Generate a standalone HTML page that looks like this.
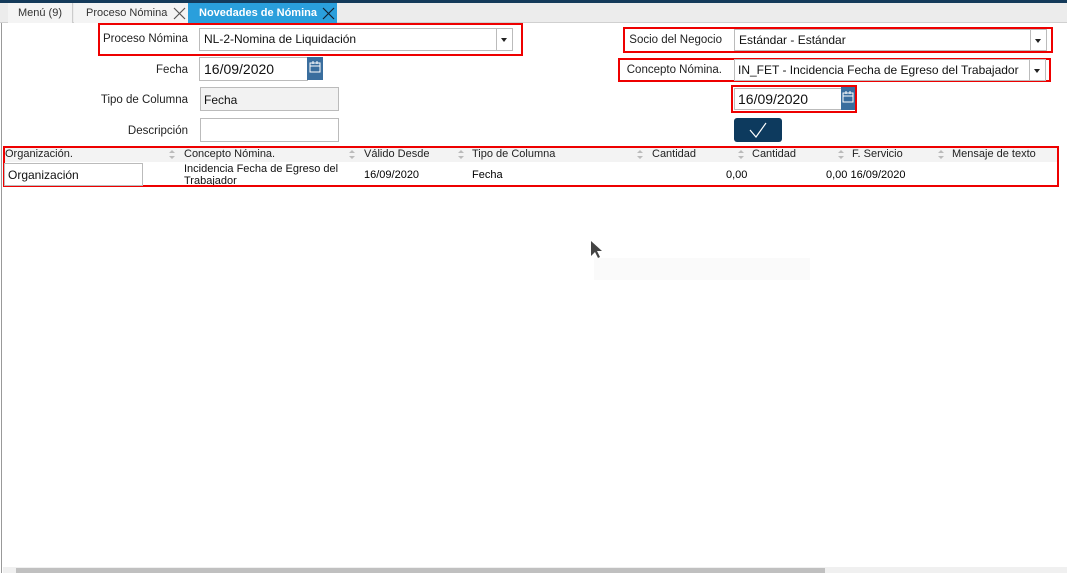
<!DOCTYPE html>
<html><head><meta charset="utf-8"><style>
body{margin:0;width:1067px;height:573px;position:relative;background:#fff;font-family:"Liberation Sans",sans-serif;overflow:hidden}
.a{position:absolute;box-sizing:border-box}
.lbl{font-size:11.5px;color:#222;text-align:right}
.inp{border:1px solid #bbb;background:#fff;font-size:12px;padding:0 4px;line-height:20px;color:#111}
.red{border:2px solid #e00}
.dd{position:absolute;right:0;top:0;bottom:0;width:15px;border-left:1px solid #bbb;background:#fff}
.dd:after{content:"";position:absolute;left:4px;top:9px;border-left:3px solid transparent;border-right:3px solid transparent;border-top:4px solid #222}
.cal{background:#3a6e9e}
.cal svg{position:absolute;left:2px;top:4px}
.hd{font-size:11px;color:#222;top:148px}
.srt{top:149px}
</style></head><body>
<div class="a" style="left:0;top:0;width:1067px;height:3px;background:#143a5a"></div>
<div class="a" style="left:0;top:3px;width:1067px;height:20px;background:#ececec;border-bottom:1px solid #d0d0d0"></div>
<div class="a" style="left:1px;top:23px;width:1px;height:550px;background:#999"></div>
<div class="a" style="left:8px;top:3px;width:65px;height:20px;background:#f4f4f4;border-right:1px solid #ccc;font-size:11px;color:#333;line-height:20px;text-align:center">Menú (9)</div>
<div class="a" style="left:74px;top:3px;width:114px;height:20px;background:#f4f4f4;font-size:11px;color:#333;line-height:20px;padding-left:12px">Proceso Nómina</div>
<svg class="a" style="left:173px;top:7px" width="13" height="13"><path d="M1 1L12 12M12 1L1 12" stroke="#555" stroke-width="1.2"/></svg>
<div class="a" style="left:188px;top:3px;width:149px;height:20px;background:#2a9fdc;font-size:11px;font-weight:bold;color:#fff;line-height:20px;padding-left:11px">Novedades de Nómina</div>
<svg class="a" style="left:322px;top:7px" width="13" height="13"><path d="M1 1L12 12M12 1L1 12" stroke="#123" stroke-width="1.2"/></svg>

<div class="a red" style="left:98px;top:23px;width:425px;height:33px"></div>
<div class="a lbl" style="left:90px;top:33px;width:98px">Proceso Nómina</div>
<div class="a inp" style="left:199px;top:28px;width:314px;height:23px;line-height:21px">NL-2-Nomina de Liquidación<div class="dd"></div></div>

<div class="a lbl" style="left:90px;top:64px;width:98px">Fecha</div>
<div class="a inp" style="left:199px;top:57px;width:109px;height:24px;font-size:14px;line-height:22px">16/09/2020</div>
<div class="a cal" style="left:307px;top:57px;width:16px;height:23px"><svg width="12" height="12"><rect x="1" y="2" width="10" height="9" fill="none" stroke="#fff"/><path d="M1 5H11M4 0V3M8 0V3" stroke="#fff"/></svg></div>

<div class="a lbl" style="left:60px;top:94px;width:128px">Tipo de Columna</div>
<div class="a inp" style="left:200px;top:87px;width:139px;height:24px;background:#f2f2f2;line-height:24px;padding-left:3px">Fecha</div>
<div class="a lbl" style="left:60px;top:125px;width:128px">Descripción</div>
<div class="a inp" style="left:200px;top:118px;width:139px;height:24px"></div>

<div class="a red" style="left:623px;top:27px;width:430px;height:26px"></div>
<div class="a lbl" style="left:625px;top:34px;width:97px">Socio del Negocio</div>
<div class="a inp" style="left:734px;top:29px;width:313px;height:22px">Estándar - Estándar<div class="dd"></div></div>
<div class="a red" style="left:618px;top:58px;width:433px;height:24px"></div>
<div class="a lbl" style="left:620px;top:64px;width:102px">Concepto Nómina.</div>
<div class="a inp" style="left:734px;top:59px;width:312px;height:22px;padding-left:3px">IN_FET - Incidencia Fecha de Egreso del Trabajador<div class="dd"></div></div>
<div class="a red" style="left:731px;top:85px;width:126px;height:28px"></div>
<div class="a inp" style="left:734px;top:88px;width:108px;height:22px;font-size:14px;line-height:20px;padding-left:3px">16/09/2020</div>
<div class="a cal" style="left:841px;top:87px;width:14px;height:23px"><svg width="12" height="12" style="left:1px"><rect x="1" y="2" width="10" height="9" fill="none" stroke="#fff"/><path d="M1 5H11M4 0V3M8 0V3" stroke="#fff"/></svg></div>
<div class="a" style="left:734px;top:118px;width:48px;height:24px;background:#0d3a5e;border-radius:3px"><svg width="48" height="24"><path d="M16 12L22 19L32 5" fill="none" stroke="#fff" stroke-width="1.2"/></svg></div>

<div class="a" style="left:3px;top:147px;width:1055px;height:15px;background:#f3f3f3"></div>
<div class="a red" style="left:3px;top:146px;width:1056px;height:41px"></div>
<div class="a hd" style="left:5px">Organización.</div>
<div class="a hd" style="left:184px">Concepto Nómina.</div>
<div class="a hd" style="left:364px">Válido Desde</div>
<div class="a hd" style="left:472px">Tipo de Columna</div>
<div class="a hd" style="left:652px">Cantidad</div>
<div class="a hd" style="left:752px">Cantidad</div>
<div class="a hd" style="left:852px">F. Servicio</div>
<div class="a hd" style="left:952px">Mensaje de texto</div>
<svg class="a srt" style="left:168px" width="8" height="11"><path d="M1 4L4 1L7 4ZM1 7L4 10L7 7Z" fill="#bbb"/></svg>
<svg class="a srt" style="left:348px" width="8" height="11"><path d="M1 4L4 1L7 4ZM1 7L4 10L7 7Z" fill="#bbb"/></svg>
<svg class="a srt" style="left:457px" width="8" height="11"><path d="M1 4L4 1L7 4ZM1 7L4 10L7 7Z" fill="#bbb"/></svg>
<svg class="a srt" style="left:636px" width="8" height="11"><path d="M1 4L4 1L7 4ZM1 7L4 10L7 7Z" fill="#bbb"/></svg>
<svg class="a srt" style="left:737px" width="8" height="11"><path d="M1 4L4 1L7 4ZM1 7L4 10L7 7Z" fill="#bbb"/></svg>
<svg class="a srt" style="left:837px" width="8" height="11"><path d="M1 4L4 1L7 4ZM1 7L4 10L7 7Z" fill="#bbb"/></svg>
<svg class="a srt" style="left:937px" width="8" height="11"><path d="M1 4L4 1L7 4ZM1 7L4 10L7 7Z" fill="#bbb"/></svg>
<div class="a inp" style="left:4px;top:163px;width:139px;height:23px;line-height:23px;padding-left:3px">Organización</div>
<div class="a" style="left:184px;top:163px;font-size:11px;line-height:12px;width:170px;height:22px;overflow:hidden;color:#111">Incidencia Fecha de Egreso del Trabajador</div>
<div class="a" style="left:364px;top:169px;font-size:11px">16/09/2020</div>
<div class="a" style="left:472px;top:169px;font-size:11px">Fecha</div>
<div class="a" style="left:726px;top:169px;font-size:11px">0,00</div>
<div class="a" style="left:826px;top:169px;font-size:11px">0,00 16/09/2020</div>

<svg class="a" style="left:590px;top:240px" width="14" height="20"><path d="M1 1V16L5 12L8 18L10 17L7 11H12Z" fill="#444"/></svg>
<div class="a" style="left:594px;top:258px;width:216px;height:22px;background:#fafafa"></div>

<div class="a" style="left:3px;top:567px;width:1064px;height:6px;background:#f0f0f0"></div>
<div class="a" style="left:16px;top:568px;width:809px;height:5px;background:#c0c0c0"></div>
</body></html>
